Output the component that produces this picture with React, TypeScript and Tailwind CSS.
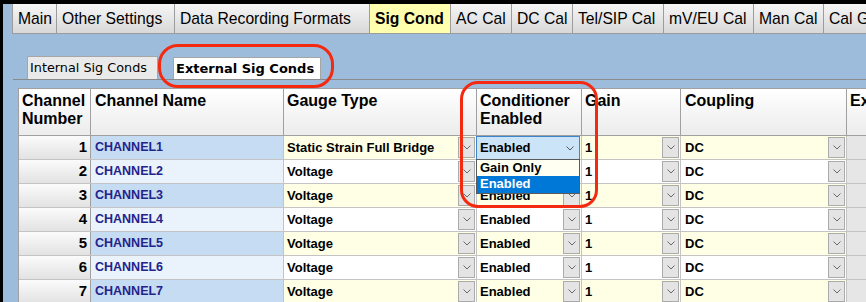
import React from "react";

const Chev = ({ color = "#6a6a6a" }: { color?: string }) => (
  <svg width="8" height="5" viewBox="0 0 8 5" className="block">
    <path d="M0.5 0.5L4 4L7.5 0.5" fill="none" stroke={color} strokeWidth="1" />
  </svg>
);

const DropBtn = () => (
  <div className="w-[17px] h-[21px] border border-[#ababab] bg-[#e4e4e4] flex items-center justify-center shrink-0">
    <Chev />
  </div>
);

const tabs: { label: string; w: string; active?: boolean }[] = [
  { label: "Main", w: "w-[45px]" },
  { label: "Other Settings", w: "w-[118px]" },
  { label: "Data Recording Formats", w: "w-[195px]" },
  { label: "Sig Cond", w: "w-[81px]", active: true },
  { label: "AC Cal", w: "w-[61px]" },
  { label: "DC Cal", w: "w-[61px]" },
  { label: "Tel/SIP Cal", w: "w-[91px]" },
  { label: "mV/EU Cal", w: "w-[90px]" },
  { label: "Man Cal", w: "w-[70px]" },
  { label: "Cal Gain", w: "w-[80px]" },
];

const rows = [1, 2, 3, 4, 5, 6, 7];

export default function App() {
  return (
    <div
      className="relative w-[866px] h-[302px] overflow-hidden"
      style={{ fontFamily: '"Liberation Sans", Arial, sans-serif' }}
    >
      <div className="w-full h-full border-t-[4px] border-l-[3px] border-black bg-[#9dbcdc] flex flex-col">
        {/* Top tab bar */}
        <div className="flex pl-[9px] h-[30px] shrink-0">
          {tabs.map((t, i) => (
            <div
              key={t.label}
              className={`${t.w} shrink-0 h-[30px] flex items-center pl-[5px] border-r border-b border-[#9c9c9c] text-[15.7px] text-black whitespace-nowrap overflow-hidden ${
                i === 0 ? "border-l" : ""
              } ${
                t.active
                  ? "bg-[#ffffae] font-bold"
                  : "bg-linear-to-b from-[#f6f6f6] to-[#d8d8d8]"
              }`}
            >
              {t.label}
            </div>
          ))}
        </div>

        {/* Sub tabs */}
        <div className="mt-[22px] ml-[10px] border-b border-[#8a8a8a] shrink-0">
          <div
            className="flex items-end pl-[14px] gap-[15px] h-[23px]"
            style={{ fontFamily: '"DejaVu Sans", Tahoma, sans-serif' }}
          >
            <div className="h-[23px] w-[131px] border border-b-0 border-[#a6a6a6] bg-[#eaeaea] flex items-center pl-[2px] text-[12.8px] text-black whitespace-nowrap">
              Internal Sig Conds
            </div>
            <div className="h-[22px] w-[148px] border border-b-0 border-[#a6a6a6] bg-white flex items-center pl-[2px] text-[13px] font-bold text-black whitespace-nowrap">
              External Sig Conds
            </div>
          </div>
        </div>

        {/* Grid */}
        <div className="mt-[8px] ml-[15px] border-l border-t border-[#a0a0a0] flex flex-col shrink-0">
          {/* Header */}
          <div className="flex h-[47px] border-b border-[#a0a0a0] bg-linear-to-b from-white to-[#ececec] text-[16px] leading-[18px] font-bold text-black">
            <div className="w-[72px] shrink-0 border-r border-[#a0a0a0] pl-[3px] pt-[3px]">
              Channel
              <br />
              Number
            </div>
            <div className="w-[193px] shrink-0 border-r border-[#a0a0a0] pl-[4px] pt-[3px]">Channel Name</div>
            <div className="w-[193px] shrink-0 border-r border-[#a0a0a0] pl-[3px] pt-[3px]">Gauge Type</div>
            <div className="w-[105px] shrink-0 border-r border-[#a0a0a0] pl-[3px] pt-[3px]">
              Conditioner
              <br />
              Enabled
            </div>
            <div className="w-[99px] shrink-0 border-r border-[#a0a0a0] pl-[3px] pt-[3px]">Gain</div>
            <div className="w-[166px] shrink-0 border-r border-[#a0a0a0] pl-[4px] pt-[3px]">Coupling</div>
            <div className="flex-1 pl-[3px] pt-[3px] whitespace-nowrap overflow-hidden">Excitation</div>
          </div>

          {rows.map((r) => {
            const odd = r % 2 === 1;
            const dataBg = odd ? "bg-[#ffffe6]" : "bg-white";
            return (
              <div key={r} className="flex h-[24px] border-b border-[#c4c4c4]">
                <div className="w-[72px] shrink-0 border-r border-[#a0a0a0] bg-linear-to-b from-[#fbfbfb] to-[#e2e2e2] flex items-center justify-end pr-[3px] text-[15px] font-bold text-black">
                  {r}
                </div>
                <div
                  className={`w-[193px] shrink-0 border-r border-[#c4c4c4] flex items-center pl-[4px] text-[12.5px] font-bold text-[#23238c] ${
                    odd ? "bg-[#c6dcf2]" : "bg-[#eaf2fb]"
                  }`}
                >
                  CHANNEL{r}
                </div>
                <div
                  className={`w-[193px] shrink-0 border-r border-[#c4c4c4] flex items-center justify-between pl-[3px] pr-[1px] text-[13px] font-bold text-black ${dataBg}`}
                >
                  <span>{r === 1 ? "Static Strain Full Bridge" : "Voltage"}</span>
                  <DropBtn />
                </div>
                {r === 1 ? (
                  <div className={`w-[105px] shrink-0 border-r border-[#c4c4c4] ${dataBg}`}>
                    <div className="ml-[-1px] w-[104px] h-[24px] border border-[#3d86cc] bg-[#cce4f7] flex items-center justify-between pl-[3px] pr-[5px] text-[13px] font-bold text-black">
                      <span>Enabled</span>
                      <Chev color="#555555" />
                    </div>
                  </div>
                ) : (
                  <div
                    className={`w-[105px] shrink-0 border-r border-[#c4c4c4] flex items-center justify-between pl-[3px] pr-[1px] text-[13px] font-bold text-black ${dataBg}`}
                  >
                    <span>Enabled</span>
                    <DropBtn />
                  </div>
                )}
                <div
                  className={`w-[99px] shrink-0 border-r border-[#c4c4c4] flex items-center justify-between pl-[3px] pr-[1px] text-[13px] font-bold text-black ${dataBg}`}
                >
                  <span>1</span>
                  <DropBtn />
                </div>
                <div
                  className={`w-[166px] shrink-0 border-r border-[#c4c4c4] flex items-center justify-between pl-[4px] pr-[1px] text-[13px] font-bold text-black ${dataBg}`}
                >
                  <span>DC</span>
                  <DropBtn />
                </div>
                <div className="flex-1 bg-[#e6e6e6]" />
              </div>
            );
          })}
        </div>
      </div>

      {/* Open dropdown list */}
      <div className="absolute left-[476px] top-[159px] w-[104px] border border-[#5a5a5a] bg-[#fffff2] text-[13px] font-bold leading-[16px]">
        <div className="pl-[3px] h-[16px] text-black">Gain Only</div>
        <div className="pl-[3px] h-[17px] bg-[#0078d7] text-white">Enabled</div>
      </div>

      {/* Red highlight marks */}
      <div className="absolute left-[158px] top-[44px] w-[176px] h-[44px] border-[3px] border-[#f42a10] rounded-[20px]" />
      <div className="absolute left-[460px] top-[81px] w-[138px] h-[127px] border-[3px] border-[#f42a10] rounded-[18px]" />
    </div>
  );
}
